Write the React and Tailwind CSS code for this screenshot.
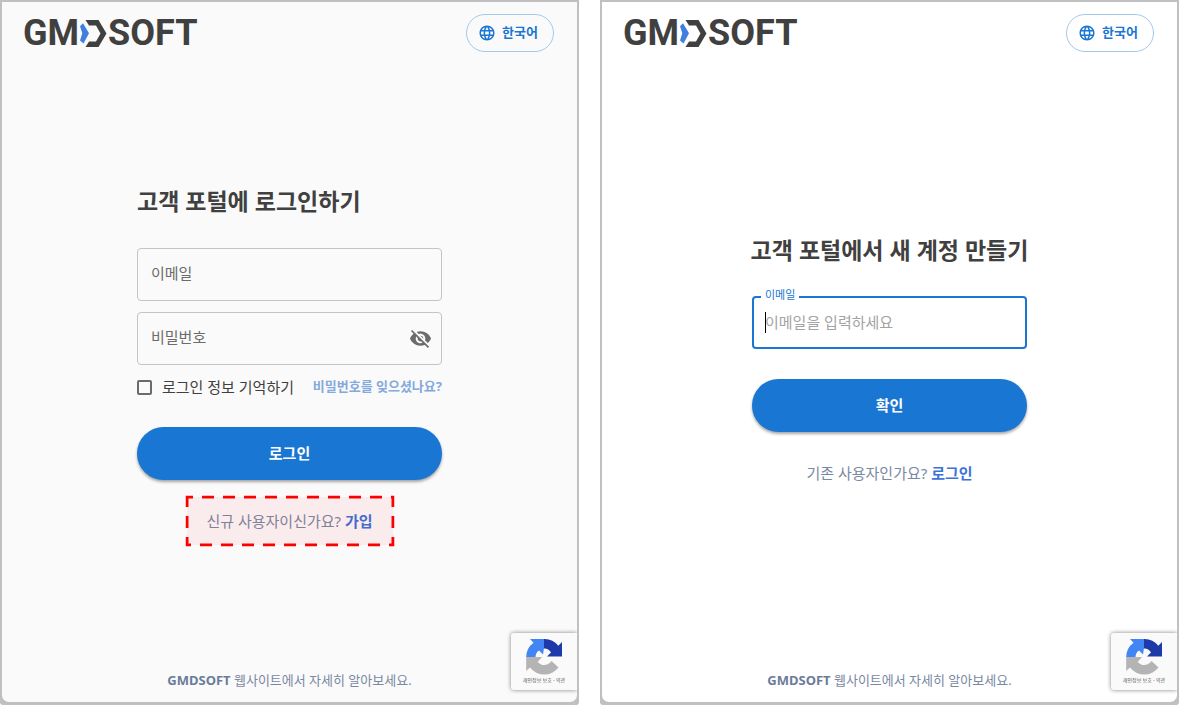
import { useState } from "react";
import { MdLanguage, MdVisibility, MdVisibilityOff } from "react-icons/md";

const titleClass = "text-[23px] leading-8 font-bold whitespace-nowrap text-[#404040]";
const linkClass = "font-bold text-[#3b74d8] hover:underline";
const submitClass =
  "h-[53px] w-full rounded-full bg-[#1976d2] text-[15px] font-bold text-white shadow-[0_2px_3px_rgba(0,0,0,0.35)] hover:bg-[#1565c0]";

function Logo() {
  return (
    <a
      href="#home"
      aria-label="GMDSOFT"
      className="flex h-[38px] items-center gap-px font-['Roboto',sans-serif] text-[36px] leading-[38px] font-bold text-[#404040]"
    >
      <span>GM</span>
      <svg viewBox="0 0 27 27" className="h-[27px] w-[27px]" aria-hidden="true">
        <path d="M3 3.3 9 13.3 3.5 23.5 0 20.5 2.3 13.3 0 6.300Z" fill="#3f7fe0" />
        <path
          d="M5.500 0H18.500L26.500 13.500 18.500 27H5.500L9 21.500H16L20.500 13.500 16 5.500H9Z"
          fill="#404040"
        />
      </svg>
      <span>SOFT</span>
    </a>
  );
}

function RecaptchaBadge() {
  return (
    <div className="absolute right-0 bottom-3 flex h-[57px] w-[66px] flex-col items-center rounded-l-[3px] bg-[#fafafa] pt-[6px] shadow-[0_0_4px_#808080]">
      <svg viewBox="0 0 36 36" className="size-9" aria-hidden="true">
        <path
          d="M36 17.500V3L32.300 6.700A18 18 0 0 0 18 0V9.500C20.500 9.300 23.500 10.500 25 13.500L21 17.500Z"
          fill="#1c3aa9"
        />
        <path
          d="M18 0H4L7.500 3.700A18 18 0 0 0 .2 18H9.500C9.500 15.500 10.500 13 13 11.500L17 15.500 18 9Z"
          fill="#4285f4"
        />
        <path
          d="M.2 18V32L4 28.500A18 18 0 0 0 32.500 28.500L25.500 22C22 27 15.500 27.500 11.700 23L16 18Z"
          fill="#b4b4b4"
        />
      </svg>
      <p className="text-[5px] leading-[10px] whitespace-nowrap text-[#555]">개인정보 보호 - 약관</p>
    </div>
  );
}

function Panel({ background, children }) {
  return (
    <section className="flex min-h-screen flex-col rounded-b-[3px] bg-[#c0c0c0] p-[2px] pb-[3px]">
      <div
        className={`relative flex flex-1 flex-col overflow-hidden rounded-b-[7px] pt-3 pb-2 ${background}`}
      >
        <header className="flex items-center justify-between pr-[23px] pl-[21px]">
          <Logo />
          <button
            type="button"
            className="flex h-[38px] w-[88px] items-center gap-[6px] rounded-full border border-[#a3c8ed] pl-[11px] text-[13px] font-bold text-[#1976d2]"
          >
            <MdLanguage className="size-[18px]" />
            한국어
          </button>
        </header>
        <main className="flex flex-1 flex-col items-center justify-center">{children}</main>
        <footer className="text-center text-[13px] leading-7 text-[#7a88a3]">
          <a href="#website" className="font-bold text-[#6b7c9b]">GMDSOFT</a> 웹사이트에서 자세히 알아보세요.
        </footer>
        <RecaptchaBadge />
      </div>
    </section>
  );
}

function LoginField({ id, label, type, children }) {
  return (
    <div className="relative">
      <input
        id={id}
        type={type}
        placeholder=" "
        className="peer h-[53px] w-full rounded-[4px] border border-[#c4c4c4] px-[13px] text-[15px] outline-none focus:border-[#1976d2]"
      />
      <label
        htmlFor={id}
        className="pointer-events-none absolute top-[13px] left-[14px] text-[15px] leading-6 text-[#6b6b6b] peer-[:not(:placeholder-shown)]:hidden"
      >
        {label}
      </label>
      {children}
    </div>
  );
}

function LoginForm() {
  const [showPassword, setShowPassword] = useState(false);

  return (
    <form className="w-[305px]" onSubmit={(e) => e.preventDefault()}>
      <h1 className={titleClass}>고객 포털에 로그인하기</h1>

      <div className="mt-[31px] space-y-[11px]">
        <LoginField id="login-email" label="이메일" type="email" />
        <LoginField id="login-password" label="비밀번호" type={showPassword ? "text" : "password"}>
          <button
            type="button"
            aria-label="비밀번호 표시"
            className="absolute inset-y-0 right-[10px] text-[#6b6b6b]"
            onClick={() => setShowPassword(!showPassword)}
          >
            {showPassword ? <MdVisibility className="size-[23px]" /> : <MdVisibilityOff className="size-[23px]" />}
          </button>
        </LoginField>
      </div>

      <div className="mt-[10px] flex h-6 items-center justify-between">
        <label htmlFor="remember" className="flex items-center gap-[10px] text-[15px] leading-6 text-[#404040]">
          <input
            id="remember"
            type="checkbox"
            className="size-[15px] appearance-none rounded-[2px] border-2 border-[#6b6b6b] checked:bg-[#1976d2]"
          />
          로그인 정보 기억하기
        </label>
        <a href="#forgot" className="text-[13px] font-bold text-[#84a9dc]">비밀번호를 잊으셨나요?</a>
      </div>

      <button type="submit" className={`mt-7 ${submitClass}`}>로그인</button>

      <div className="relative mx-auto mt-[29px] w-fit">
        <p className="text-[15px] leading-6 text-[#7a88a3]">
          신규 사용자이신가요? <a href="#signup" className={linkClass}>가입</a>
        </p>
        {/* highlight around the sign-up link */}
        <svg
          viewBox="0 0 209 51"
          className="pointer-events-none absolute top-1/2 left-1/2 h-[51px] w-[209px] -translate-x-1/2 -translate-y-1/2"
          aria-hidden="true"
        >
          <rect
            x="1.5"
            y="1.5"
            width="206"
            height="48"
            fill="#ff0000"
            fillOpacity="0.055"
            stroke="#ff0000"
            strokeWidth="3"
            strokeDasharray="12 9"
            strokeDashoffset="6"
          />
        </svg>
      </div>
    </form>
  );
}

function SignUpForm() {
  const [email, setEmail] = useState("");

  return (
    <form className="w-[275px]" onSubmit={(e) => e.preventDefault()}>
      <h1 className={`flex justify-center ${titleClass}`}>고객 포털에서 새 계정 만들기</h1>

      <div className="relative mt-[30px]">
        <input
          id="signup-email"
          type="email"
          value={email}
          onChange={(e) => setEmail(e.target.value)}
          placeholder="이메일을 입력하세요"
          className="h-[53px] w-full rounded-[4px] border-2 border-[#1976d2] px-[11px] text-[15px] outline-none placeholder:text-[#a3a3a3]"
        />
        <label
          htmlFor="signup-email"
          className="absolute -top-[9px] left-[9px] bg-white px-1 text-[11px] leading-4 text-[#1976d2]"
        >
          이메일
        </label>
        {!email && <span className="pointer-events-none absolute top-4 left-[13px] h-[21px] w-px bg-black" />}
      </div>

      <button type="submit" className={`mt-[30px] ${submitClass}`}>확인</button>

      <p className="mt-[29px] text-center text-[15px] leading-6 text-[#7a88a3]">
        기존 사용자인가요? <a href="#login" className={linkClass}>로그인</a>
      </p>
    </form>
  );
}

export default function App() {
  return (
    <div
      lang="ko"
      className="grid min-h-screen grid-cols-2 gap-[21px] bg-white font-['Noto_Sans','Noto_Sans_CJK_KR',sans-serif]"
    >
      <Panel background="bg-[#fafafa]">
        <LoginForm />
      </Panel>
      <Panel background="bg-white">
        <SignUpForm />
      </Panel>
    </div>
  );
}
